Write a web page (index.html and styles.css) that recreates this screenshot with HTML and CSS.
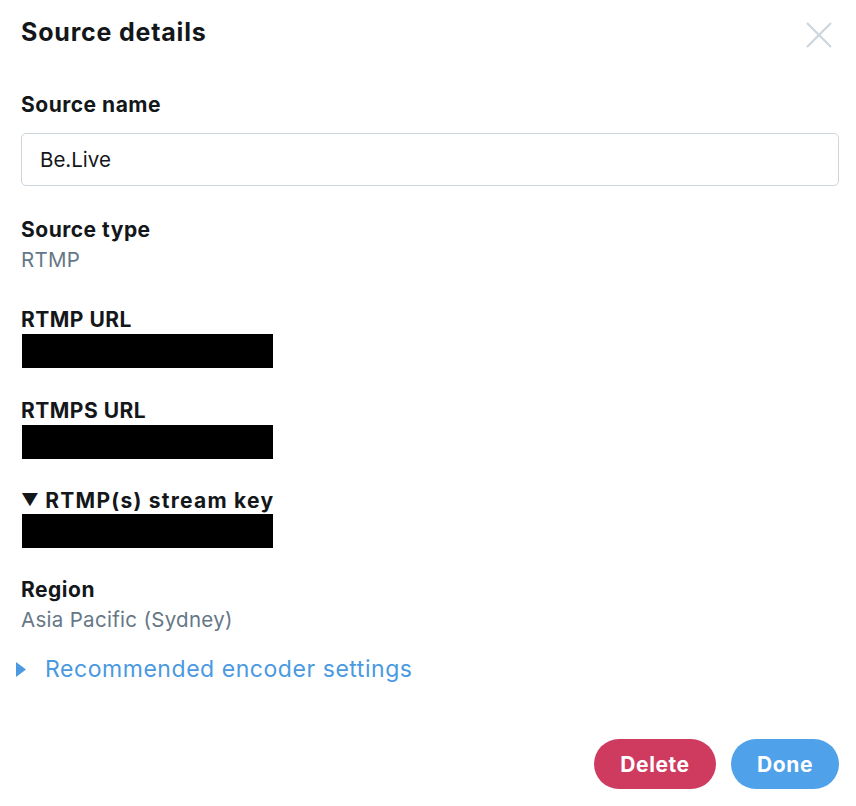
FILE: index.html
```html
<!DOCTYPE html>
<html>
<head>
<meta charset="utf-8">
<link rel="stylesheet" href="styles.css">
</head>
<body>
<div class="dialog">
  <div class="header">
    <h1 class="title">Source details</h1>
    <button class="close" aria-label="Close">
      <svg width="26" height="26" viewBox="0 0 26 26"><path d="M1 1 L25 25 M25 1 L1 25" stroke="#ccd6dd" stroke-width="2.2" fill="none"/></svg>
    </button>
  </div>

  <div class="field first">
    <div class="label">Source name</div>
    <input class="input" type="text" value="Be.Live">
  </div>

  <div class="field type">
    <div class="label">Source type</div>
    <div class="value">RTMP</div>
  </div>

  <div class="field url">
    <div class="label">RTMP URL</div>
    <div class="redacted"></div>
  </div>

  <div class="field url2">
    <div class="label">RTMPS URL</div>
    <div class="redacted"></div>
  </div>

  <div class="field key">
    <div class="label"><span class="tri">▼</span><span class="keytext">RTMP(s) stream key</span></div>
    <div class="redacted"></div>
  </div>

  <div class="field region">
    <div class="label">Region</div>
    <div class="value">Asia Pacific (Sydney)</div>
  </div>

  <div class="disclosure">
    <svg class="caret" width="10" height="15" viewBox="0 0 10 15"><path d="M0 0 L10 7.5 L0 15 Z" fill="#4a99e1"/></svg>
    <span class="link">Recommended encoder settings</span>
  </div>

  <div class="actions">
    <button class="btn delete">Delete</button>
    <button class="btn done">Done</button>
  </div>
</div>
</body>
</html>
```

FILE: styles.css
```css
* { box-sizing: border-box; }
html, body { margin: 0; padding: 0; background: #fff; }
body {
  font-family: Inter, "Helvetica Neue", Arial, sans-serif;
  color: #14171a;
}
.dialog {
  width: 856px;
  padding: 17px 17px 0 21px;
}
.header {
  display: flex;
  justify-content: space-between;
  align-items: center;
  height: 30px;
}
.title {
  margin: 0;
  font-size: 25px;
  font-weight: 700;
  line-height: 30px;
  letter-spacing: 0.8px;
}
.close {
  border: 0;
  background: none;
  padding: 0;
  margin-right: 7px;
  margin-top: 5px;
  width: 26px;
  height: 26px;
  display: flex;
}
.label {
  font-size: 21px;
  font-weight: 700;
  line-height: 30px;
  letter-spacing: 0.5px;
  padding-top: 1px;
  height: 30px;
  white-space: nowrap;
}
.value {
  font-size: 20.5px;
  line-height: 30px;
  color: #657786;
  letter-spacing: 0.3px;
  padding-top: 1px;
  height: 30px;
}
.field.first { margin-top: 42px; }
.field.type { margin-top: 28px; }
.field.url { margin-top: 30px; }
.field.url2 { margin-top: 27px; }
.field.key { margin-top: 26px; }
.field.region { margin-top: 26px; }
.input {
  display: block;
  width: 100%;
  height: 53px;
  margin-top: 14px;
  border: 1px solid #ccd6dd;
  border-radius: 5px;
  padding: 0 18px;
  font-family: inherit;
  font-size: 20.5px;
  color: #14171a;
  outline: none;
}
.redacted {
  width: 251px;
  height: 34px;
  margin-left: 1px;
  background: #000;
}
.field.key .redacted { margin-top: -1px; }
.tri {
  font-size: 17px;
  margin-right: 6px;
  position: relative;
  top: -2px;
}
.keytext { letter-spacing: 1.25px; }
.disclosure {
  display: flex;
  align-items: center;
  margin-top: 20px;
  margin-left: -5px;
  height: 30px;
}
.caret { margin-right: 19px; }
.link {
  color: #4a99e1;
  font-size: 23px;
  line-height: 30px;
  letter-spacing: 0.55px;
}
.actions {
  display: flex;
  justify-content: flex-end;
  gap: 15px;
  margin-top: 55px;
}
.btn {
  height: 50px;
  border: 0;
  border-radius: 25px;
  color: #fff;
  font-family: inherit;
  font-size: 21px;
  font-weight: 700;
  letter-spacing: 0.6px;
  padding: 0;
}
.delete { background: #cf3b5f; width: 122px; }
.done { background: #4fa1ea; width: 108px; }
```
